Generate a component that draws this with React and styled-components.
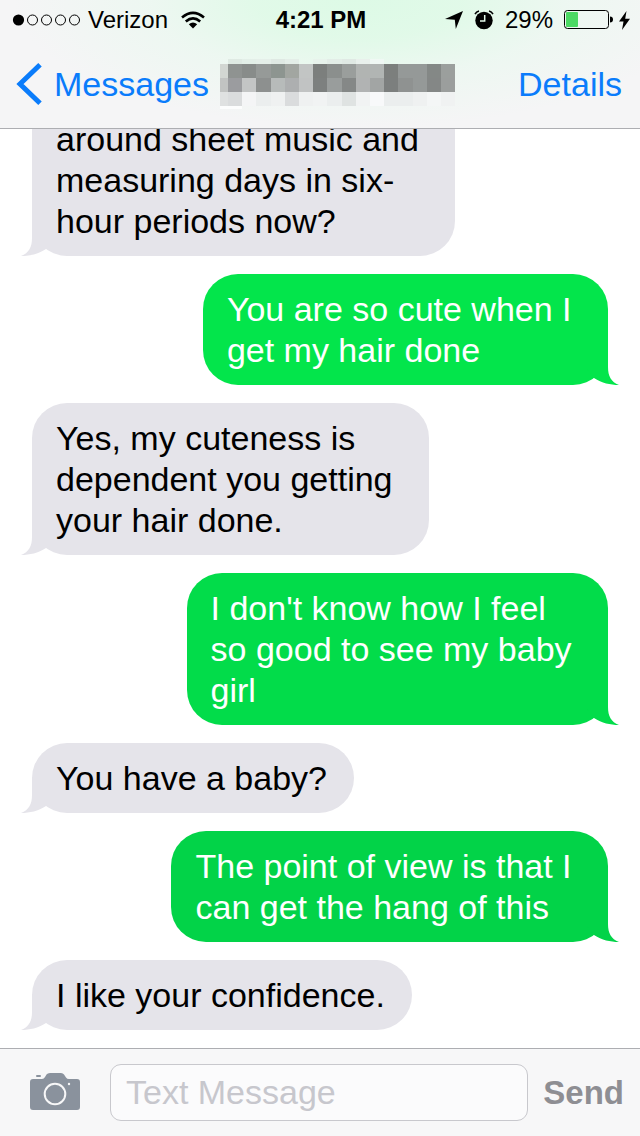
import React from "react";
import styled, { createGlobalStyle, css } from "styled-components";

const GlobalStyle = createGlobalStyle`
  *, *::before, *::after { box-sizing: border-box; }
  body { margin: 0; background: #fff; }
  body, button, input { font-family: "Liberation Sans", Arial, sans-serif; }
`;

const Screen = styled.div`
  display: flex;
  flex-direction: column;
  height: 100vh;
  background: #fff;
  color: #000;
`;

const Header = styled.header`
  flex: none;
  border-bottom: 1px solid #adaeb2;
  background:
    radial-gradient(ellipse 54% 100% at 56% 0, #ddfae6 0%, rgba(223, 250, 231, 0.9) 30%, rgba(232, 249, 238, 0.6) 60%, rgba(246, 246, 247, 0) 100%),
    #f5f5f6;
`;

const StatusBar = styled.div`
  display: grid;
  grid-template-columns: 1fr auto 1fr;
  align-items: center;
  height: 40px;
  padding: 0 10px 0 12px;
  font-size: 24px;
  line-height: 28px;
`;

const StatusGroup = styled.div`
  display: flex;
  align-items: center;
  gap: ${(p) => p.$gap}px;
  justify-content: ${(p) => (p.$end ? "flex-end" : "flex-start")};
`;

const Clock = styled.time`
  font-weight: 700;
`;

const NavBar = styled.nav`
  display: flex;
  align-items: center;
  justify-content: space-between;
  height: 88px;
  padding: 0 18px 0 16px;
`;

const NavLink = styled.a`
  display: flex;
  align-items: center;
  gap: 12px;
  color: #0a7cfb;
  font-size: 34px;
  line-height: 40px;
  text-decoration: none;
`;

const ContactName = styled.svg`
  display: block;
  margin-right: 52px;
`;

/* Reversed column keeps the newest message in view when the thread is longer than the window. */
const Conversation = styled.main`
  flex: 1;
  min-height: 0;
  display: flex;
  flex-direction: column-reverse;
  overflow: hidden auto;
  scrollbar-width: none;
`;

const Thread = styled.div`
  flex: none;
  display: flex;
  flex-direction: column;
  gap: 18px;
  padding: 0 32px 18px;
`;

const Bubble = styled.div`
  position: relative;
  flex: none;
  padding: 15px 27px 14px 24px;
  border-radius: ${(p) => (p.$continued ? "0 0 35px 35px" : "35px")};
  font-size: 34px;
  line-height: 41px;
  white-space: pre;
  ${(p) =>
    p.$sent
      ? css`
          align-self: flex-end;
          background: ${p.$tone};
          color: #fff;
        `
      : css`
          align-self: flex-start;
          background: #e5e4ea;
        `}
`;

const Tail = styled.svg`
  position: absolute;
  bottom: 0;
  ${(p) => (p.$sent ? "right: -11px;" : "left: -11px; transform: scaleX(-1);")}
`;

const Composer = styled.form`
  flex: none;
  display: flex;
  align-items: center;
  gap: 15px;
  height: 88px;
  padding: 0 16px 0 30px;
  border-top: 1px solid #adaeb2;
  background: #f7f7f8;
`;

const CameraButton = styled.button`
  display: block;
  margin-right: 15px;
  padding: 0;
  border: 0;
  background: none;
`;

const MessageInput = styled.input`
  flex: 1;
  min-width: 0;
  height: 57px;
  padding: 0 15px;
  border: 1px solid #c8c8cd;
  border-radius: 11px;
  background: #fbfbfc;
  font-size: 34px;
  &::placeholder { color: #c7c7cd; opacity: 1; }
`;

const SendButton = styled.button`
  padding: 0;
  border: 0;
  background: none;
  color: #8e8e93;
  font-size: 33px;
  font-weight: 700;
`;

const SignalIcon = () => (
  <svg width="68" height="12" viewBox="0 0 68 12" role="img" aria-label="Signal">
    <circle cx="6.5" cy="6" r="5.6" />
    {[20.5, 34.5, 48.5, 62.5].map((x) => (
      <circle key={x} cx={x} cy="6" r="5" fill="none" stroke="#000" strokeWidth="1" />
    ))}
  </svg>
);

const WifiIcon = () => (
  <svg width="24" height="18" viewBox="0 0 24 18" role="img" aria-label="Wi-Fi">
    <g fill="none" stroke="#000" strokeWidth="2.6">
      <path d="M1 6.4Q12-2.8 23 6.4" />
      <path d="M4.8 10.4Q12 4.2 19.2 10.4" />
    </g>
    <path d="M7.8 13.2Q12 9.6 16.2 13.2L12 17.4Z" />
  </svg>
);

const LocationIcon = () => (
  <svg width="18" height="18" viewBox="0 0 18 18" role="img" aria-label="Location">
    <path d="M18 0 10.8 18 9.8 8.8 0 8Z" />
  </svg>
);

const AlarmIcon = () => (
  <svg width="20" height="20" viewBox="0 0 20 20" role="img" aria-label="Alarm">
    <circle cx="10" cy="10.5" r="8.7" />
    <path d="M1 4.2Q2.3 1.7 5 1M19 4.2Q17.7 1.7 15 1" fill="none" stroke="#000" strokeWidth="1.5" />
    <path d="M10.7 5V11H6" fill="none" stroke="#e3f9ea" strokeWidth="1.5" />
  </svg>
);

const BatteryIcon = () => (
  <svg width="49" height="20" viewBox="0 0 49 20" role="img" aria-label="Battery">
    <rect x=".5" y=".5" width="44" height="18" rx="3" fill="none" stroke="#000" />
    <rect x="2" y="2" width="12" height="15" rx="1" fill="#4cd964" />
    <path d="M46 6.5Q49 6.5 49 9.5T46 12.5Z" />
  </svg>
);

const BoltIcon = () => (
  <svg width="11" height="19" viewBox="0 0 11 19" role="img" aria-label="Charging">
    <path d="M7.5 0 0 10.5H4.5L3 19 11 7.7H6.2Z" />
  </svg>
);

const BackIcon = () => (
  <svg width="26" height="42" viewBox="0 0 26 42" aria-hidden="true">
    <path d="M24 1.8 4 21 24 40.2" fill="none" stroke="#0a7cfb" strokeWidth="5" />
  </svg>
);

const CameraIcon = () => (
  <svg width="50" height="38" viewBox="0 0 50 38" aria-hidden="true">
    <path
      d="M3 7H12Q14 7 15 5L16.5 2.5Q17.5 1 20 1H31Q33 1 34 2.5L36 5.5Q37 7 39 7H47Q50 7 50 10V35Q50 38 47 38H3Q0 38 0 35V10Q0 7 3 7Z"
      fill="#8a929d"
    />
    <rect x="6" y="3" width="5" height="2" rx="1" fill="#8a929d" />
    <circle cx="25" cy="22" r="10.3" fill="none" stroke="#f7f7f8" strokeWidth="2" />
    <circle cx="39" cy="12" r="1.2" fill="#f7f7f8" />
  </svg>
);

const MOSAIC_ROWS = [
  { y: 0, h: 5, tones: ["", "dfeae3", "e3efe8", "e5efe9", "dfe9e3", "e4eee8", "", "e8f3ec", "e3ede7", "e0e9e4", "e9f0ec", "f0f8f4", "", "", "", "", ""] },
  { y: 5, h: 14, tones: ["d2d6d2", "8f9391", "888c8a", "969a98", "8d9590", "a2a6a1", "c2c5c4", "7c7f7d", "8b8f8d", "9a9e9c", "b1b4b2", "b1b5b3", "7c7f7d", "959998", "959998", "848886", "9b9f9d"] },
  { y: 19, h: 14, tones: ["c1c3c2", "9b9c9f", "c3c5c5", "8d908f", "b7bbba", "adafb0", "c1c3c3", "7d807f", "999d9c", "858887", "b1b3b3", "a2a5a4", "7c7f7e", "8f9291", "959998", "848786", "9b9e9d"] },
  { y: 33, h: 14, tones: ["dfe1e1", "dadcdd", "f4f5f6", "ebeeee", "eff1f1", "dadcdd", "eff1f1", "f1f3f3", "ebeeee", "dfe3e2", "f1f3f3", "f8f9fa", "ebeeee", "ebeeee", "eff1f1", "f4f6f6", "f0f2f2"] },
];

const RedactedName = () => (
  <ContactName width="236" height="50" viewBox="0 0 236 50" role="img" aria-label="Contact" shapeRendering="crispEdges">
    {MOSAIC_ROWS.map((row) =>
      row.tones.map((tone, i) =>
        tone ? (
          <rect key={`${row.y}-${i}`} x={i ? i * 14.2 - 6.2 : 0} y={row.y} width={i ? 14.3 : 8} height={row.h} fill={`#${tone}`} />
        ) : null
      )
    )}
    <rect x="0" y="47" width="22" height="3" fill="#fcfdfd" />
  </ContactName>
);

const MESSAGES = [
  { lines: ["around sheet music and ", "measuring days in six-", "hour periods now?"], continued: true },
  { lines: ["You are so cute when I ", "get my hair done"], tone: "#03e54b" },
  { lines: ["Yes, my cuteness is ", "dependent you getting ", "your hair done."] },
  { lines: ["I don't know how I feel ", "so good to see my baby ", "girl"], tone: "#02dc4a" },
  { lines: ["You have a baby?"] },
  { lines: ["The point of view is that I ", "can get the hang of this"], tone: "#02d348" },
  { lines: ["I like your confidence."] },
];

const Message = ({ lines, tone, continued }) => {
  const sent = Boolean(tone);
  return (
    <Bubble $sent={sent} $tone={tone} $continued={continued}>
      {lines.join("\n")}
      <Tail $sent={sent} width="40" height="36" viewBox="0 0 40 36" aria-hidden="true">
        <path d="M29 0V18C29 27 32 33 40 36C31 36 23 34 15 29L8 20Z" fill={tone || "#e5e4ea"} />
      </Tail>
    </Bubble>
  );
};

export default function App() {
  return (
    <Screen>
      <GlobalStyle />
      <Header>
        <StatusBar>
          <StatusGroup $gap={13}>
            <StatusGroup $gap={8}>
              <SignalIcon />
              <span>Verizon</span>
            </StatusGroup>
            <WifiIcon />
          </StatusGroup>
          <Clock>4:21 PM</Clock>
          <StatusGroup $gap={11} $end>
            <LocationIcon />
            <AlarmIcon />
            <span>29%</span>
            <StatusGroup $gap={6}>
              <BatteryIcon />
              <BoltIcon />
            </StatusGroup>
          </StatusGroup>
        </StatusBar>
        <NavBar>
          <NavLink href="#messages">
            <BackIcon />
            Messages
          </NavLink>
          <RedactedName />
          <NavLink href="#details">Details</NavLink>
        </NavBar>
      </Header>
      <Conversation>
        <Thread>
          {MESSAGES.map((m) => (
            <Message key={m.lines[0]} {...m} />
          ))}
        </Thread>
      </Conversation>
      <Composer onSubmit={(e) => e.preventDefault()}>
        <CameraButton type="button" aria-label="Attach photo">
          <CameraIcon />
        </CameraButton>
        <MessageInput aria-label="Text Message" placeholder="Text Message" />
        <SendButton type="submit">Send</SendButton>
      </Composer>
    </Screen>
  );
}
